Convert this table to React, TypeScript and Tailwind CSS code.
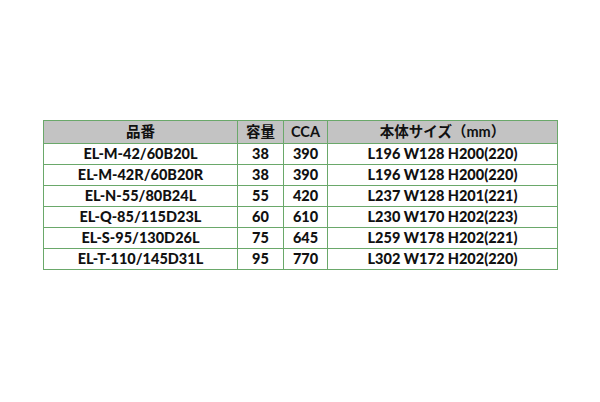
const rows = [
  ["EL-M-42/60B20L", "38", "390", "L196 W128 H200(220)"],
  ["EL-M-42R/60B20R", "38", "390", "L196 W128 H200(220)"],
  ["EL-N-55/80B24L", "55", "420", "L237 W128 H201(221)"],
  ["EL-Q-85/115D23L", "60", "610", "L230 W170 H202(223)"],
  ["EL-S-95/130D26L", "75", "645", "L259 W178 H202(221)"],
  ["EL-T-110/145D31L", "95", "770", "L302 W172 H202(220)"],
]

export default function App() {
  return (
    <div
      className="w-[600px] h-[402px] bg-white pt-[120px] pl-[43px]"
      style={{ fontFamily: 'Lato, "Noto Sans CJK JP", sans-serif' }}
    >
      <table className="border-collapse border border-[#8aa58a] text-[14.5px] font-black text-[#111111] table-fixed w-[514px]">
        <colgroup>
          <col className="w-[194px]" />
          <col className="w-[46px]" />
          <col className="w-[44px]" />
          <col className="w-[230px]" />
        </colgroup>
        <thead>
          <tr className="h-[22px] bg-[#c3c3c3]">
            <th className="border border-[#6aa86a] p-0 text-center font-bold">品番</th>
            <th className="border border-[#6aa86a] p-0 text-center font-bold">容量</th>
            <th className="border border-[#6aa86a] p-0 text-center">CCA</th>
            <th className="border border-[#6aa86a] p-0 text-center">本体サイズ（mm）</th>
          </tr>
        </thead>
        <tbody>
          {rows.map((r) => (
            <tr key={r[0]} className="h-[21px]">
              {r.map((c, i) => (
                <td key={i} className="border border-[#6aa86a] p-0 text-center leading-none">
                  {c}
                </td>
              ))}
            </tr>
          ))}
        </tbody>
      </table>
    </div>
  )
}
